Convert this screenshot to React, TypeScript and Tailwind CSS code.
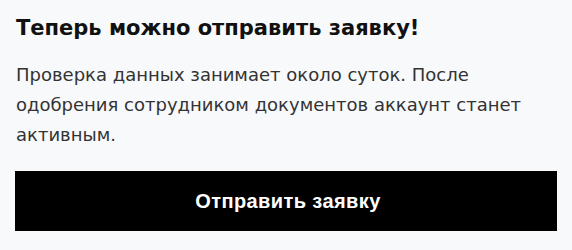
export default function App() {
  return (
    <div className="w-[572px] h-[250px] bg-[#f8f9fb] px-[15px] pt-[14px]" style={{ fontFamily: "'DejaVu Sans', sans-serif" }}>
      <h1 className="pl-[1px] text-[21px] leading-[28px] font-bold text-[#111111]">Теперь можно отправить заявку!</h1>
      <p className="mt-[18px] pl-[1px] pr-[10px] text-[18px] leading-[30px] text-[#333333]">
        Проверка данных занимает около суток. После одобрения сотрудником документов аккаунт станет активным.
      </p>
      <button className="mt-[21px] w-full h-[60px] bg-black text-white text-[20px] tracking-[0.4px] font-bold flex items-center justify-center pl-[4px]" style={{ fontFamily: "'Liberation Sans', sans-serif" }}>
        Отправить заявку
      </button>
    </div>
  );
}
